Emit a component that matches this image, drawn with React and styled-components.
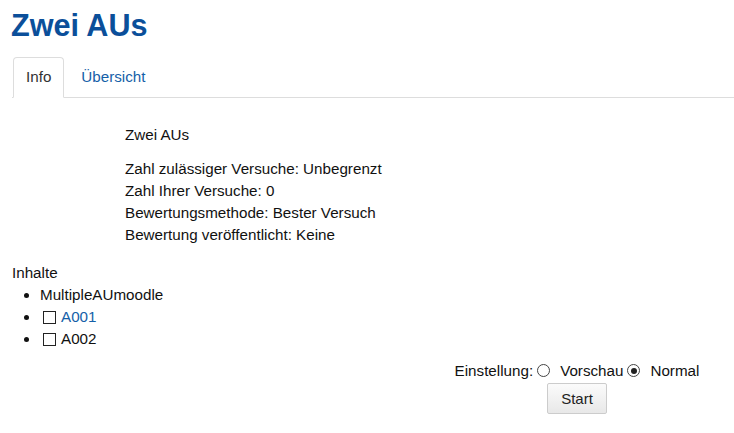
import React, { useState } from "react";
import styled, { createGlobalStyle } from "styled-components";

const Global = createGlobalStyle`
  body {
    margin: 0;
    background: #fff;
    font-family: "Liberation Sans", Arial, sans-serif;
    font-size: 15.2px;
    line-height: 22px;
    color: #111;
  }
`;

const Page = styled.div`
  padding: 0 0 0 12px;
`;

const Title = styled.h1`
  margin: 7px 0 0 -1px;
  font-size: 30.6px;
  line-height: 36px;
  font-weight: bold;
  color: #0b4f9a;
`;

const Tabs = styled.nav`
  display: flex;
  margin-top: 14px;
  padding-left: 1px;
  border-bottom: 1px solid #ddd;
`;

const Tab = styled.a`
  display: block;
  padding: 9px 12px 10px;
  margin-right: 4px;
  margin-bottom: -1px;
  line-height: 20px;
  border: 1px solid ${(p) => (p.$active ? "#ddd" : "transparent")};
  border-bottom-color: ${(p) => (p.$active ? "#fff" : "transparent")};
  border-radius: 4px 4px 0 0;
  color: ${(p) => (p.$active ? "#333" : "#1560a8")};
  text-decoration: none;
  cursor: pointer;
`;

const Intro = styled.div`
  padding: 26px 0 0 113px;
`;

const P = styled.p`
  margin: 0 0 12px;
`;

const Details = styled.div``;

const Section = styled.div`
  margin-top: 16px;
`;

const List = styled.ul`
  margin: 0;
  padding-left: 28px;
`;

const Item = styled.li``;

const Box = styled.span`
  display: inline-block;
  width: 11px;
  height: 11px;
  border: 1px solid #222;
  margin: 0 5px -2px 3px;
`;

const Link = styled.a`
  color: #1560a8;
  text-decoration: none;
`;

const Settings = styled.div`
  margin: 10px 0 0 408px;
  width: 314px;
  text-align: center;
`;

const Radio = styled.input.attrs({ type: "radio" })`
  appearance: none;
  width: 13px;
  height: 13px;
  margin: 0 10px 0 4px;
  border: 1px solid #444;
  border-radius: 50%;
  vertical-align: -1px;
  position: relative;
  background: #fff;

  &:checked::after {
    content: "";
    position: absolute;
    left: 2.5px;
    top: 2.5px;
    width: 6px;
    height: 6px;
    border-radius: 50%;
    background: #222;
  }
`;

const Button = styled.button`
  display: block;
  margin: 1px auto 0;
  width: 60px;
  height: 31px;
  font-family: inherit;
  font-size: 15px;
  color: #222;
  border: 1px solid #ccc;
  border-radius: 2px;
  background: linear-gradient(#fbfbfb, #e8e8e8);
  cursor: pointer;
`;

const details = [
  "Zahl zulässiger Versuche: Unbegrenzt",
  "Zahl Ihrer Versuche: 0",
  "Bewertungsmethode: Bester Versuch",
  "Bewertung veröffentlicht: Keine",
];

const App = () => {
  const [tab, setTab] = useState("info");
  const [mode, setMode] = useState("normal");

  return (
    <Page>
      <Global />
      <Title>Zwei AUs</Title>
      <Tabs>
        <Tab $active={tab === "info"} onClick={() => setTab("info")}>
          Info
        </Tab>
        <Tab $active={tab === "overview"} onClick={() => setTab("overview")}>
          Übersicht
        </Tab>
      </Tabs>
      <Intro>
        <P>Zwei AUs</P>
        <Details>
          {details.map((d) => (
            <div key={d}>{d}</div>
          ))}
        </Details>
      </Intro>
      <Section>
        Inhalte
        <List>
          <Item>MultipleAUmoodle</Item>
          <Item>
            <Box />
            <Link href="#">A001</Link>
          </Item>
          <Item>
            <Box />
            A002
          </Item>
        </List>
      </Section>
      <Settings>
        Einstellung:
        <Radio
          name="mode"
          checked={mode === "preview"}
          onChange={() => setMode("preview")}
        />
        Vorschau
        <Radio
          name="mode"
          checked={mode === "normal"}
          onChange={() => setMode("normal")}
        />
        Normal
        <Button>Start</Button>
      </Settings>
    </Page>
  );
};

export default App;
